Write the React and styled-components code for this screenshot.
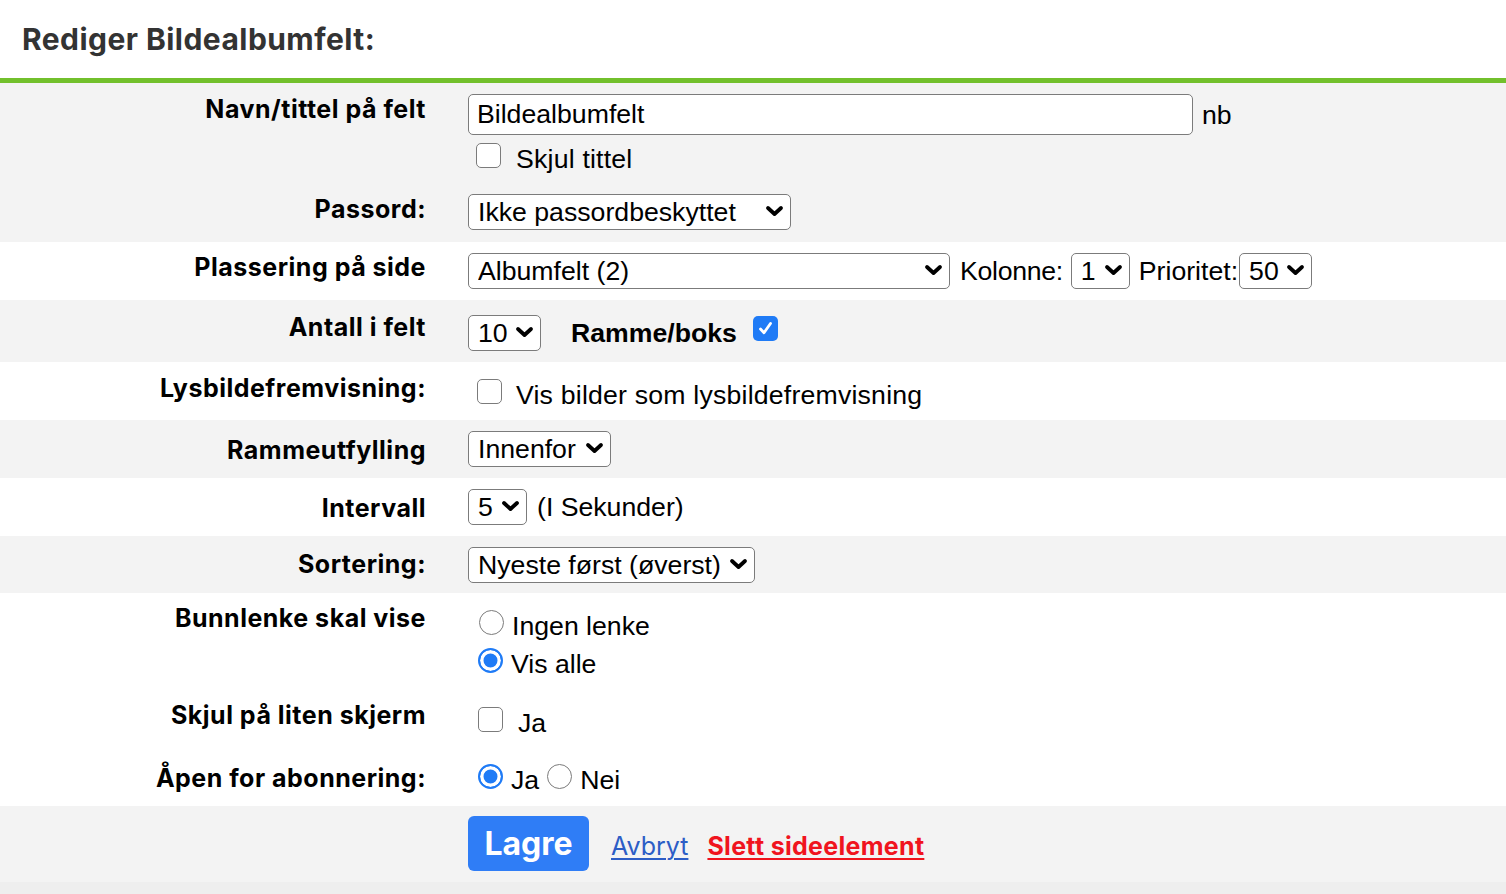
import React from "react";
import styled, { createGlobalStyle } from "styled-components";

const Global = createGlobalStyle`
  html, body { margin: 0; padding: 0; background: #eeeeee; }
  body { font-family: Inter, "Noto Sans", sans-serif; color: #000; }
  * { box-sizing: border-box; }
`;

const Page = styled.div`
  width: 1506px;
  background: #fff;
`;

const Header = styled.header`
  height: 83px;
  padding: 21px 0 0 22px;
  border-bottom: 5px solid #72c02c;
  background: #fff;
`;

const Title = styled.h1`
  margin: 0;
  font: 700 30px/36px Inter, sans-serif;
  letter-spacing: 0.45px;
  color: #333;
`;

const Row = styled.div`
  display: grid;
  grid-template-columns: 426px 1fr;
  column-gap: 42px;
  height: ${(p) => p.$h}px;
  background: ${(p) => (p.$alt ? "#f3f3f3" : "#fff")};
`;

const Label = styled.div`
  padding-top: ${(p) => p.$top}px;
  text-align: right;
  font: 700 25px/30px Inter, sans-serif;
  letter-spacing: 0.5px;
  color: #000;
  white-space: nowrap;
`;

const Value = styled.div`
  padding-top: ${(p) => p.$top}px;
  display: flex;
  flex-direction: column;
  align-items: flex-start;
  gap: ${(p) => p.$gap || 0}px;
  font: 26.67px/30px "Liberation Sans", Arial, sans-serif;
  color: #000;
`;

const Line = styled.div`
  display: flex;
  align-items: ${(p) => p.$align || "center"};
  margin-top: ${(p) => p.$mt || 0}px;
  white-space: nowrap;
`;

const Text = styled.span`
  margin-left: ${(p) => p.$ml || 0}px;
  font-weight: ${(p) => (p.$bold ? 700 : 400)};
  letter-spacing: ${(p) => p.$ls || 0}px;
  line-height: 30px;
`;

const TextInput = styled.input`
  width: ${(p) => p.$w}px;
  height: 41px;
  padding: 0 8px;
  border: 1.5px solid #7b7b7b;
  border-radius: 5px;
  background: #fff;
  font: 26.67px "Liberation Sans", Arial, sans-serif;
  color: #000;
  outline: none;
`;

const SelectWrap = styled.span`
  position: relative;
  display: inline-flex;
  margin-left: ${(p) => p.$ml || 0}px;
`;

const Select = styled.select`
  appearance: none;
  -webkit-appearance: none;
  width: ${(p) => p.$w}px;
  height: 36px;
  padding: 0 0 0 9px;
  border: 1.5px solid #7b7b7b;
  border-radius: 5px;
  background: #fff;
  font: 26.67px "Liberation Sans", Arial, sans-serif;
  color: #000;
  outline: none;
`;

const ChevronIcon = styled.svg`
  position: absolute;
  right: 7px;
  top: 50%;
  margin-top: -7px;
  pointer-events: none;
`;

const Chevron = () => (
  <ChevronIcon width="19" height="12" viewBox="0 0 19 12">
    <path
      d="M3 3 L9.5 9 L16 3"
      fill="none"
      stroke="#000"
      strokeWidth="3.8"
      strokeLinecap="round"
      strokeLinejoin="round"
    />
  </ChevronIcon>
);

const Dropdown = ({ w, ml, value, options }) => (
  <SelectWrap $ml={ml}>
    <Select $w={w} defaultValue={value}>
      {(options || [value]).map((o) => (
        <option key={o}>{o}</option>
      ))}
    </Select>
    <Chevron />
  </SelectWrap>
);

const Box = styled.span`
  display: inline-flex;
  align-items: center;
  justify-content: center;
  flex: none;
  width: 25px;
  height: 25px;
  margin-left: ${(p) => p.$ml || 0}px;
  margin-top: ${(p) => p.$mt || 0}px;
  align-self: ${(p) => p.$self || "auto"};
  border-radius: 5px;
  border: ${(p) => (p.$on ? "none" : "1.5px solid #7b7b7b")};
  background: ${(p) => (p.$on ? "#1f7bf6" : "#fff")};
`;

const Checkbox = ({ on, ml, mt, self }) => (
  <Box $on={on} $ml={ml} $mt={mt} $self={self} role="checkbox" aria-checked={!!on}>
    {on && (
      <svg width="17" height="17" viewBox="0 0 17 17">
        <path
          d="M3.5 9 L7 12.8 L13.5 3.5"
          fill="none"
          stroke="#fff"
          strokeWidth="2.8"
          strokeLinecap="round"
          strokeLinejoin="round"
        />
      </svg>
    )}
  </Box>
);

const Radio = styled.span`
  display: inline-block;
  flex: none;
  width: 25px;
  height: 25px;
  margin-left: ${(p) => p.$ml || 0}px;
  margin-top: -1px;
  border-radius: 50%;
  border: ${(p) => (p.$on ? "2.5px solid #1f7bf6" : "1.5px solid #7b7b7b")};
  background: ${(p) => (p.$on ? "#1f7bf6" : "#fff")};
  box-shadow: ${(p) => (p.$on ? "inset 0 0 0 3.5px #fff" : "none")};
`;

const Actions = styled.div`
  padding-top: 10px;
  display: flex;
  align-items: baseline;
`;

const SaveButton = styled.button`
  width: 121px;
  height: 55px;
  border: none;
  border-radius: 6px;
  background: #2f7df6;
  color: #fff;
  font: 700 32px Inter, sans-serif;
  padding: 0;
`;

const Link = styled.a`
  margin-left: ${(p) => p.$ml}px;
  font: ${(p) => (p.$danger ? 700 : 400)} 25px Inter, sans-serif;
  letter-spacing: ${(p) => (p.$danger ? 0.3 : 0)}px;
  color: ${(p) => (p.$danger ? "#f0141e" : "#2c5dc6")};
  text-decoration: underline;
  text-decoration-thickness: 2px;
  text-underline-offset: 3px;
  cursor: pointer;
`;

export default function App() {
  return (
    <>
      <Global />
      <Page>
        <Header>
          <Title>Rediger Bildealbumfelt:</Title>
        </Header>

        <Row $alt $h={100}>
          <Label $top={11}>Navn/tittel på felt</Label>
          <Value $top={11}>
            <Line>
              <TextInput $w={725} defaultValue="Bildealbumfelt" />
              <Text $ml={9}>nb</Text>
            </Line>
            <Line $align="flex-start" $mt={9}>
              <Checkbox ml={8} mt={-1} />
              <Text $ml={15} $ls={0.2}>Skjul tittel</Text>
            </Line>
          </Value>
        </Row>

        <Row $alt $h={59}>
          <Label $top={11}>Passord:</Label>
          <Value $top={11}>
            <Dropdown w={323} value="Ikke passordbeskyttet" />
          </Value>
        </Row>

        <Row $h={58}>
          <Label $top={10}>Plassering på side</Label>
          <Value $top={11}>
            <Line>
              <Dropdown w={482} value="Albumfelt (2)" />
              <Text $ml={10} $ls={-0.3}>Kolonne:</Text>
              <Dropdown ml={8} w={59} value="1" options={["1", "2", "3"]} />
              <Text $ml={9}>Prioritet:</Text>
              <Dropdown ml={1} w={73} value="50" />
            </Line>
          </Value>
        </Row>

        <Row $alt $h={62}>
          <Label $top={12}>Antall i felt</Label>
          <Value $top={15}>
            <Line>
              <Dropdown w={73} value="10" />
              <Text $ml={30} $bold>Ramme/boks</Text>
              <Checkbox on ml={16} mt={1} self="flex-start" />
            </Line>
          </Value>
        </Row>

        <Row $h={58}>
          <Label $top={11}>Lysbildefremvisning:</Label>
          <Value $top={18}>
            <Line $align="flex-start">
              <Checkbox ml={9} mt={-1} />
              <Text $ml={14} $ls={0.2}>Vis bilder som lysbildefremvisning</Text>
            </Line>
          </Value>
        </Row>

        <Row $alt $h={58}>
          <Label $top={15}>Rammeutfylling</Label>
          <Value $top={11}>
            <Dropdown w={143} value="Innenfor" />
          </Value>
        </Row>

        <Row $h={58}>
          <Label $top={15}>Intervall</Label>
          <Value $top={11}>
            <Line>
              <Dropdown w={59} value="5" />
              <Text $ml={10}>(I Sekunder)</Text>
            </Line>
          </Value>
        </Row>

        <Row $alt $h={57}>
          <Label $top={13}>Sortering:</Label>
          <Value $top={11}>
            <Dropdown w={287} value="Nyeste først (øverst)" />
          </Value>
        </Row>

        <Row $h={97}>
          <Label $top={10}>Bunnlenke skal vise</Label>
          <Value $top={18} $gap={8}>
            <Line $align="flex-start">
              <Radio $ml={11} />
              <Text $ml={8}>Ingen lenke</Text>
            </Line>
            <Line $align="flex-start">
              <Radio $ml={10} $on />
              <Text $ml={8}>Vis alle</Text>
            </Line>
          </Value>
        </Row>

        <Row $h={58}>
          <Label $top={10}>Skjul på liten skjerm</Label>
          <Value $top={18}>
            <Line $align="flex-start">
              <Checkbox ml={10} mt={-1} />
              <Text $ml={15}>Ja</Text>
            </Line>
          </Value>
        </Row>

        <Row $h={58}>
          <Label $top={15}>Åpen for abonnering:</Label>
          <Value $top={17}>
            <Line $align="flex-start">
              <Radio $ml={10} $on />
              <Text $ml={8}>Ja</Text>
              <Radio $ml={8} />
              <Text $ml={8}>Nei</Text>
            </Line>
          </Value>
        </Row>

        <Row $alt $h={76}>
          <div />
          <Actions>
            <SaveButton>Lagre</SaveButton>
            <Link $ml={22}>Avbryt</Link>
            <Link $ml={19} $danger>Slett sideelement</Link>
          </Actions>
        </Row>
      </Page>
    </>
  );
}
